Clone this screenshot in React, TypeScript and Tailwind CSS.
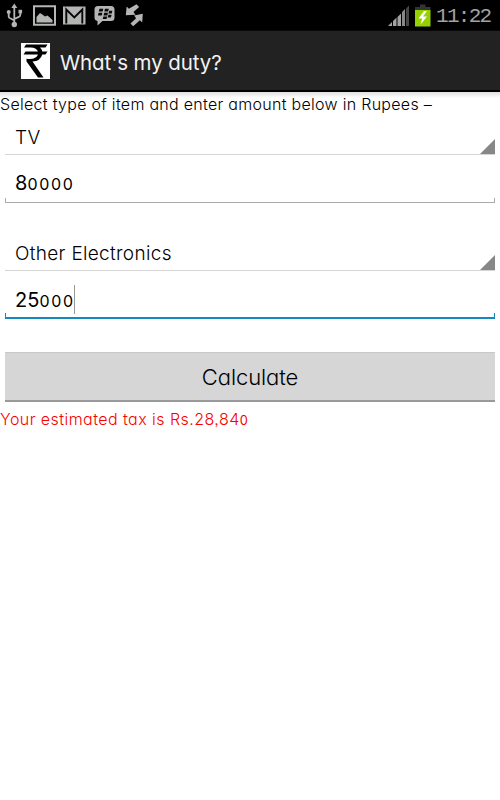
import React from "react";

function Num({ value }: { value: string }) {
  return (
    <>
      {value.split("").map((c, i) =>
        c === "0" ? (
          <span key={i} className="text-[0.8em] tracking-[0.105em]">{c}</span>
        ) : (
          <span key={i}>{c}</span>
        )
      )}
    </>
  );
}

function StatusBar() {
  return (
    <div className="flex h-[30px] items-center bg-black">
      <svg width="150" height="30" viewBox="0 0 150 30" fill="#b4b6b4">
        <g stroke="#b4b6b4" strokeWidth="1.800" fill="none">
          <path d="M14.300 6v17M8.700 12v4.500q0 1.500 2 2l3.600 2M20.300 12v3q0 1.500-2 2.200l-4 1.800" />
        </g>
        <path d="M14.300 3.500l3 4.500h-6z" />
        <circle cx="14.300" cy="24.500" r="2.700" />
        <circle cx="8.700" cy="12" r="2" />
        <path d="M18.500 9.800h3.600v3.600h-3.600z" />
        <path fillRule="evenodd" d="M33 5.300h23v20.500h-23zM35 7.300v16.500h19V7.300z" />
        <path d="M36.500 22.500v-5.500l3.500-4 3 2 2 1.500 2.500-1 5 4.500v2.500z" />
        <path d="M63 6.500h22.500v18H63z" />
        <path d="M66.300 23.500V9.500l8 8 8-8v14" fill="none" stroke="#050505" strokeWidth="1.900" />
        <path d="M98 6h13q3.500 0 3.500 3.500v8q0 3.500-3.500 3.500h-8.500l-5 4.500V21q-3-.5-3-3.500v-8q0-3.500 3.500-3.500z" />
        <g fill="#080808">
          <path d="M99.500 8.800h3.800l-.7 2.700h-3.800zM105 8.800h3.800l-.7 2.700h-3.800zM98.600 12.700h3.800l-.7 2.700h-3.800zM104.200 12.700h3.800l-.7 2.700h-3.800zM109.200 10.800h3.200l-.7 2.700h-3.200zM108.400 14.700h3.200l-.7 2.700h-3.200zM103.400 16.500h3.800l-.7 2.500h-3.800z" />
        </g>
        <path d="M136.500 4.200l2.600 2.700-5.600 5.200 2 2.600-9.700.6.900-8.700 2.200 2.200z" />
        <path d="M142.800 13.700l-.6 8.900-2.300-2.300-6.700 5.900-2.700-2.700 5.600-5.300-2-2.600z" />
      </svg>
      <svg className="ml-auto" width="49" height="30" viewBox="0 0 49 30">
        <g fill="#a2a2a2">
          <path d="M1 26l4-4v4zM6 26v-5l3.500-3.500v8.500zM10.500 26v-9l3.500-3.500v12.500z" />
        </g>
        <path d="M15 26V12l3-3V26z" fill="#888" />
        <path d="M19 26V8.500l3-3V26z" fill="#464646" />
        <path d="M33 4.500h5.500v2.500h5V10.500H28V7h5z" fill="#343434" />
        <path d="M28 10h15.500v16.500H28z" fill="#94cf00" />
        <path d="M37 11l-5.500 7.500h3.700l-1.700 6 6.500-8h-4l4-5.500z" fill="#fff" />
      </svg>
      <span className="w-[64px] pt-[3px] font-['Liberation_Mono',monospace] text-[21px] leading-[27px] tracking-[-1.700px] text-[#a2a2a2]">11:22</span>
    </div>
  );
}

function Header() {
  return (
    <header className="flex h-[62px] items-center border-t border-b-2 border-t-[#080808] border-b-black bg-[#222] pl-[21px]">
      <svg width="29" height="36" viewBox="0 0 29 36" className="bg-white">
        <path d="M5 1.500H26.500L24.500 4.500H19Q21 6.500 21.300 8.500H26.500L24.500 11.500H21.300Q19.500 18 11.500 18.500L22.500 34.500H17L5.500 18.500V15.700Q15 17 17 11.500H2.500L4.500 8.500H17Q15 4.500 10 4.500H3z" fill="#000" />
      </svg>
      <h1 className="ml-[10px] pt-[5px] text-[20.500px] font-normal tracking-[-0.100px] text-[#f2f2f2]">What's my duty?</h1>
    </header>
  );
}

function Spinner({ children }: { children: React.ReactNode }) {
  return (
    <div className="mx-[5px] flex h-[35px] items-end justify-between border-b border-[#d5d5d5]">
      <span className="pl-[10px] text-[19px] leading-[33px] tracking-[0.320px]">{children}</span>
      <svg width="15" height="15" viewBox="0 0 15 15"><path d="M15 0v15H0z" fill="#878787" /></svg>
    </div>
  );
}

function Field({ value, focused = false }: { value: string; focused?: boolean }) {
  const edge = focused ? "bg-[#1489bd]" : "bg-[#aaa]";
  return (
    <div className="mx-[5px]">
      <div className={"flex pl-[10px] text-[20px] leading-[30px] font-normal " + (focused ? "h-[42px] pt-[14px]" : "h-[43px] pt-[13px]")}>
        <span className="w-[59px] whitespace-nowrap"><Num value={value} /></span>
        {focused && <i className="h-[29px] w-px bg-[#999]" />}
      </div>
      <div className="flex h-[4px] justify-between">
        <i className={"w-px " + edge} />
        <i className={"w-px " + edge} />
      </div>
      <div className={(focused ? "h-[2px] " : "h-px ") + edge} />
    </div>
  );
}

export default function App() {
  return (
    <div className="h-[800px] w-[500px] overflow-hidden bg-white font-['Inter',sans-serif] font-light text-black [font-feature-settings:'cv11','ss03']">
      <StatusBar />
      <Header />
      <main className="bg-[linear-gradient(#dedede,#fff_6px)]">
        <p className="h-[28px] whitespace-nowrap text-[16px] leading-[24px] tracking-[0.290px]">Select type of item and enter amount below in Rupees –</p>
        <Spinner>TV</Spinner>
        <Field value="80000" />
        <div className="mt-[33px]"><Spinner>Other Electronics</Spinner></div>
        <Field value="25000" focused />
        <button className="mx-[5px] mt-[33px] block h-[50px] w-[490px] border-t border-b-2 border-t-[#c8c8c8] border-b-[#999] bg-[#d6d6d6] pt-[2px] text-[22px] tracking-[-0.100px]">Calculate</button>
        <p className="text-[16px] leading-[35px] tracking-[0.450px] text-[#fa0000]">Your estimated tax is Rs.28,84<span className="text-[0.8em] font-normal">0</span></p>
      </main>
    </div>
  );
}
